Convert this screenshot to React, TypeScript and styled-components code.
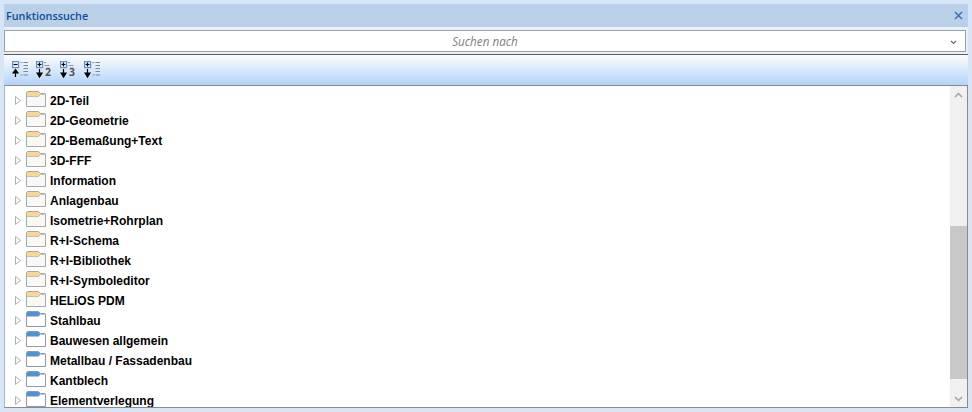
import React from "react";
import styled, { createGlobalStyle } from "styled-components";

const GlobalStyle = createGlobalStyle`
  html, body {
    margin: 0;
    padding: 0;
    overflow: hidden;
  }
`;

const Window = styled.div`
  width: 972px;
  height: 412px;
  box-sizing: border-box;
  padding: 4px 4px 4px 4px;
  background: #d6e6f7;
  display: flex;
  flex-direction: column;
  font-family: "Open Sans", "Noto Sans", sans-serif;
  overflow: hidden;
`;

const TitleBar = styled.div`
  height: 23px;
  flex: none;
  background: #b9d0e8;
  display: flex;
  align-items: center;
  justify-content: space-between;
  padding: 0 5px 0 2px;
  font-size: 10.8px;
  font-weight: 600;
  color: #0f4c9a;
`;

const CloseIcon = styled.svg`
  width: 9px;
  height: 9px;
  display: block;
`;

const SearchRow = styled.div`
  flex: none;
  height: 27px;
  box-sizing: border-box;
  padding: 3px 0 2px;
  background: #e8f1fa;
`;

const Combo = styled.div`
  height: 100%;
  box-sizing: border-box;
  margin-right: 2px;
  background: #ffffff;
  border: 1px solid #a0a0a0;
  display: flex;
  align-items: center;
  position: relative;
`;

const Placeholder = styled.div`
  flex: 1;
  text-align: center;
  font-size: 11.7px;
  font-style: italic;
  color: #808080;
`;

const ComboArrow = styled.svg`
  width: 7px;
  height: 5px;
  position: absolute;
  right: 8px;
  top: 9px;
`;

const Toolbar = styled.div`
  flex: none;
  height: 31px;
  box-sizing: border-box;
  border-top: 1px solid #5b5b5b;
  background: linear-gradient(#fdfeff 0%, #dcebfc 45%, #b2d3fb 100%);
  display: flex;
  align-items: center;
  gap: 4px;
  padding: 0 0 2px 8px;
`;

const ToolIcon = styled.svg`
  width: 20px;
  height: 20px;
  display: block;
`;

const TreePanel = styled.div`
  flex: 1;
  min-height: 0;
  display: flex;
  background: #ffffff;
  border: 1px solid #8a8a8a;
  border-left-color: #a9b4c0;
`;

const TreeList = styled.div`
  flex: 1;
  overflow: hidden;
  padding-top: 4px;
`;

const TreeRow = styled.div`
  height: 20px;
  display: flex;
  align-items: center;
  padding-left: 10px;
`;

const Expander = styled.svg`
  width: 6px;
  height: 9px;
  flex: none;
  margin-right: 5px;
`;

const FolderIcon = styled.svg`
  width: 20px;
  height: 17px;
  flex: none;
  margin: 0 4px 1px 0;
`;

const RowLabel = styled.span`
  font-family: "Liberation Sans", Arial, sans-serif;
  font-size: 12px;
  font-weight: 700;
  color: #000000;
  white-space: nowrap;
  padding-top: 2px;
`;

const ScrollBar = styled.div`
  width: 17px;
  flex: none;
  background: #f0f0f0;
  display: flex;
  flex-direction: column;
`;

const ScrollButton = styled.div`
  height: 17px;
  flex: none;
  display: flex;
  align-items: center;
  justify-content: center;
`;

const ScrollTrack = styled.div`
  flex: 1;
  display: flex;
  flex-direction: column;
  justify-content: flex-end;
  padding-bottom: 11px;
`;

const ScrollThumb = styled.div`
  height: 153px;
  background: #c8c8c8;
`;

const ScrollArrow = styled.svg`
  width: 9px;
  height: 6px;
`;

type Row = { label: string; color: "yellow" | "blue" };

const rows: Row[] = [
  { label: "2D-Teil", color: "yellow" },
  { label: "2D-Geometrie", color: "yellow" },
  { label: "2D-Bemaßung+Text", color: "yellow" },
  { label: "3D-FFF", color: "yellow" },
  { label: "Information", color: "yellow" },
  { label: "Anlagenbau", color: "yellow" },
  { label: "Isometrie+Rohrplan", color: "yellow" },
  { label: "R+I-Schema", color: "yellow" },
  { label: "R+I-Bibliothek", color: "yellow" },
  { label: "R+I-Symboleditor", color: "yellow" },
  { label: "HELiOS PDM", color: "yellow" },
  { label: "Stahlbau", color: "blue" },
  { label: "Bauwesen allgemein", color: "blue" },
  { label: "Metallbau / Fassadenbau", color: "blue" },
  { label: "Kantblech", color: "blue" },
  { label: "Elementverlegung", color: "blue" },
];

const Folder = ({ color }: { color: Row["color"] }) => (
  <FolderIcon viewBox="0 0 20 17">
    <path
      d="M0.5 2 Q0.5 0.5 2 0.5 H12.5 L14.5 2.5 H18.5 Q19.5 2.5 19.5 3.5 V15.5 H0.5 Z"
      fill={color === "yellow" ? "#f8f8f5" : "#ffffff"}
      stroke={color === "yellow" ? "#a8a8a8" : "#8d9aa6"}
    />
    <path
      d="M1 5 V2 Q1 1 2 1 H12.5 L14 2.5 V3.5 L12.5 5 Z"
      fill={color === "yellow" ? "#f8d78e" : "#4a94d8"}
    />
    <path d="M1 5.5 H12.5 L14.5 3.5 H19" fill="none" stroke="#c0c0c0" />
  </FolderIcon>
);

// small tree glyph shared by the toolbar buttons
const ToolButton = ({ sign, up, digit }: { sign: string; up?: boolean; digit?: string }) => (
  <ToolIcon viewBox="0 0 20 20">
    <rect x="0.6" y="2.6" width="6" height="6" fill="#f4f8fd" stroke="#5f8fc8" strokeWidth="1.2" />
    <path d="M1.5 5.5 H5.5" stroke="#000" strokeWidth="1.2" />
    {sign === "+" && <path d="M3.5 3.5 V7.5" stroke="#000" strokeWidth="1.2" />}
    {up ? (
      <path d="M3.5 18 V12.5 M1 14 L3.5 10.5 L6 14 Z" stroke="#000" fill="#000" strokeWidth="1.2" />
    ) : (
      <path d="M3.5 10 V15 M1 14 L3.5 18 L6 14 Z" stroke="#000" fill="#000" strokeWidth="1.2" />
    )}
    {digit ? (
      <>
        <path d="M8 3.5 H10 M8.5 6.5 H13.5 M10 9 H13.5" stroke="#8f99a3" />
        <text x="9" y="17" fontSize="10.5" fontWeight="700" fill="#555" fontFamily="Open Sans, sans-serif">
          {digit}
        </text>
      </>
    ) : (
      <path
        d="M8.5 3.5 H10.5 M11.5 3.5 H16 M11.5 6.5 H16 M11.5 9.5 H16 M11.5 12.5 H16 M8.5 16 H10.5 M11.5 16 H16"
        stroke="#7f8a95"
      />
    )}
  </ToolIcon>
);

export default function App() {
  return (
    <>
      <GlobalStyle />
      <Window>
        <TitleBar>
          Funktionssuche
          <CloseIcon viewBox="0 0 9 9">
            <path d="M1 1 L8 8 M8 1 L1 8" stroke="#3f6fb0" strokeWidth="1.5" />
          </CloseIcon>
        </TitleBar>
        <SearchRow>
          <Combo>
            <Placeholder>Suchen nach</Placeholder>
            <ComboArrow viewBox="0 0 7 5">
              <path d="M1 1 L3.5 3.5 L6 1" fill="none" stroke="#666" strokeWidth="1.1" />
            </ComboArrow>
          </Combo>
        </SearchRow>
        <Toolbar>
          <ToolButton sign="-" up />
          <ToolButton sign="+" digit="2" />
          <ToolButton sign="+" digit="3" />
          <ToolButton sign="+" />
        </Toolbar>
        <TreePanel>
          <TreeList>
            {rows.map((row) => (
              <TreeRow key={row.label}>
                <Expander viewBox="0 0 6 9">
                  <path d="M0.5 0.5 L5.5 4.5 L0.5 8.5 Z" fill="#fff" stroke="#b0b0b0" />
                </Expander>
                <Folder color={row.color} />
                <RowLabel>{row.label}</RowLabel>
              </TreeRow>
            ))}
          </TreeList>
          <ScrollBar>
            <ScrollButton>
              <ScrollArrow viewBox="0 0 9 6">
                <path d="M1 5 L4.5 1.5 L8 5" fill="none" stroke="#a3a3a3" strokeWidth="1.5" />
              </ScrollArrow>
            </ScrollButton>
            <ScrollTrack>
              <ScrollThumb />
            </ScrollTrack>
            <ScrollButton>
              <ScrollArrow viewBox="0 0 9 6">
                <path d="M1 1 L4.5 4.5 L8 1" fill="none" stroke="#a3a3a3" strokeWidth="1.5" />
              </ScrollArrow>
            </ScrollButton>
          </ScrollBar>
        </TreePanel>
      </Window>
    </>
  );
}
